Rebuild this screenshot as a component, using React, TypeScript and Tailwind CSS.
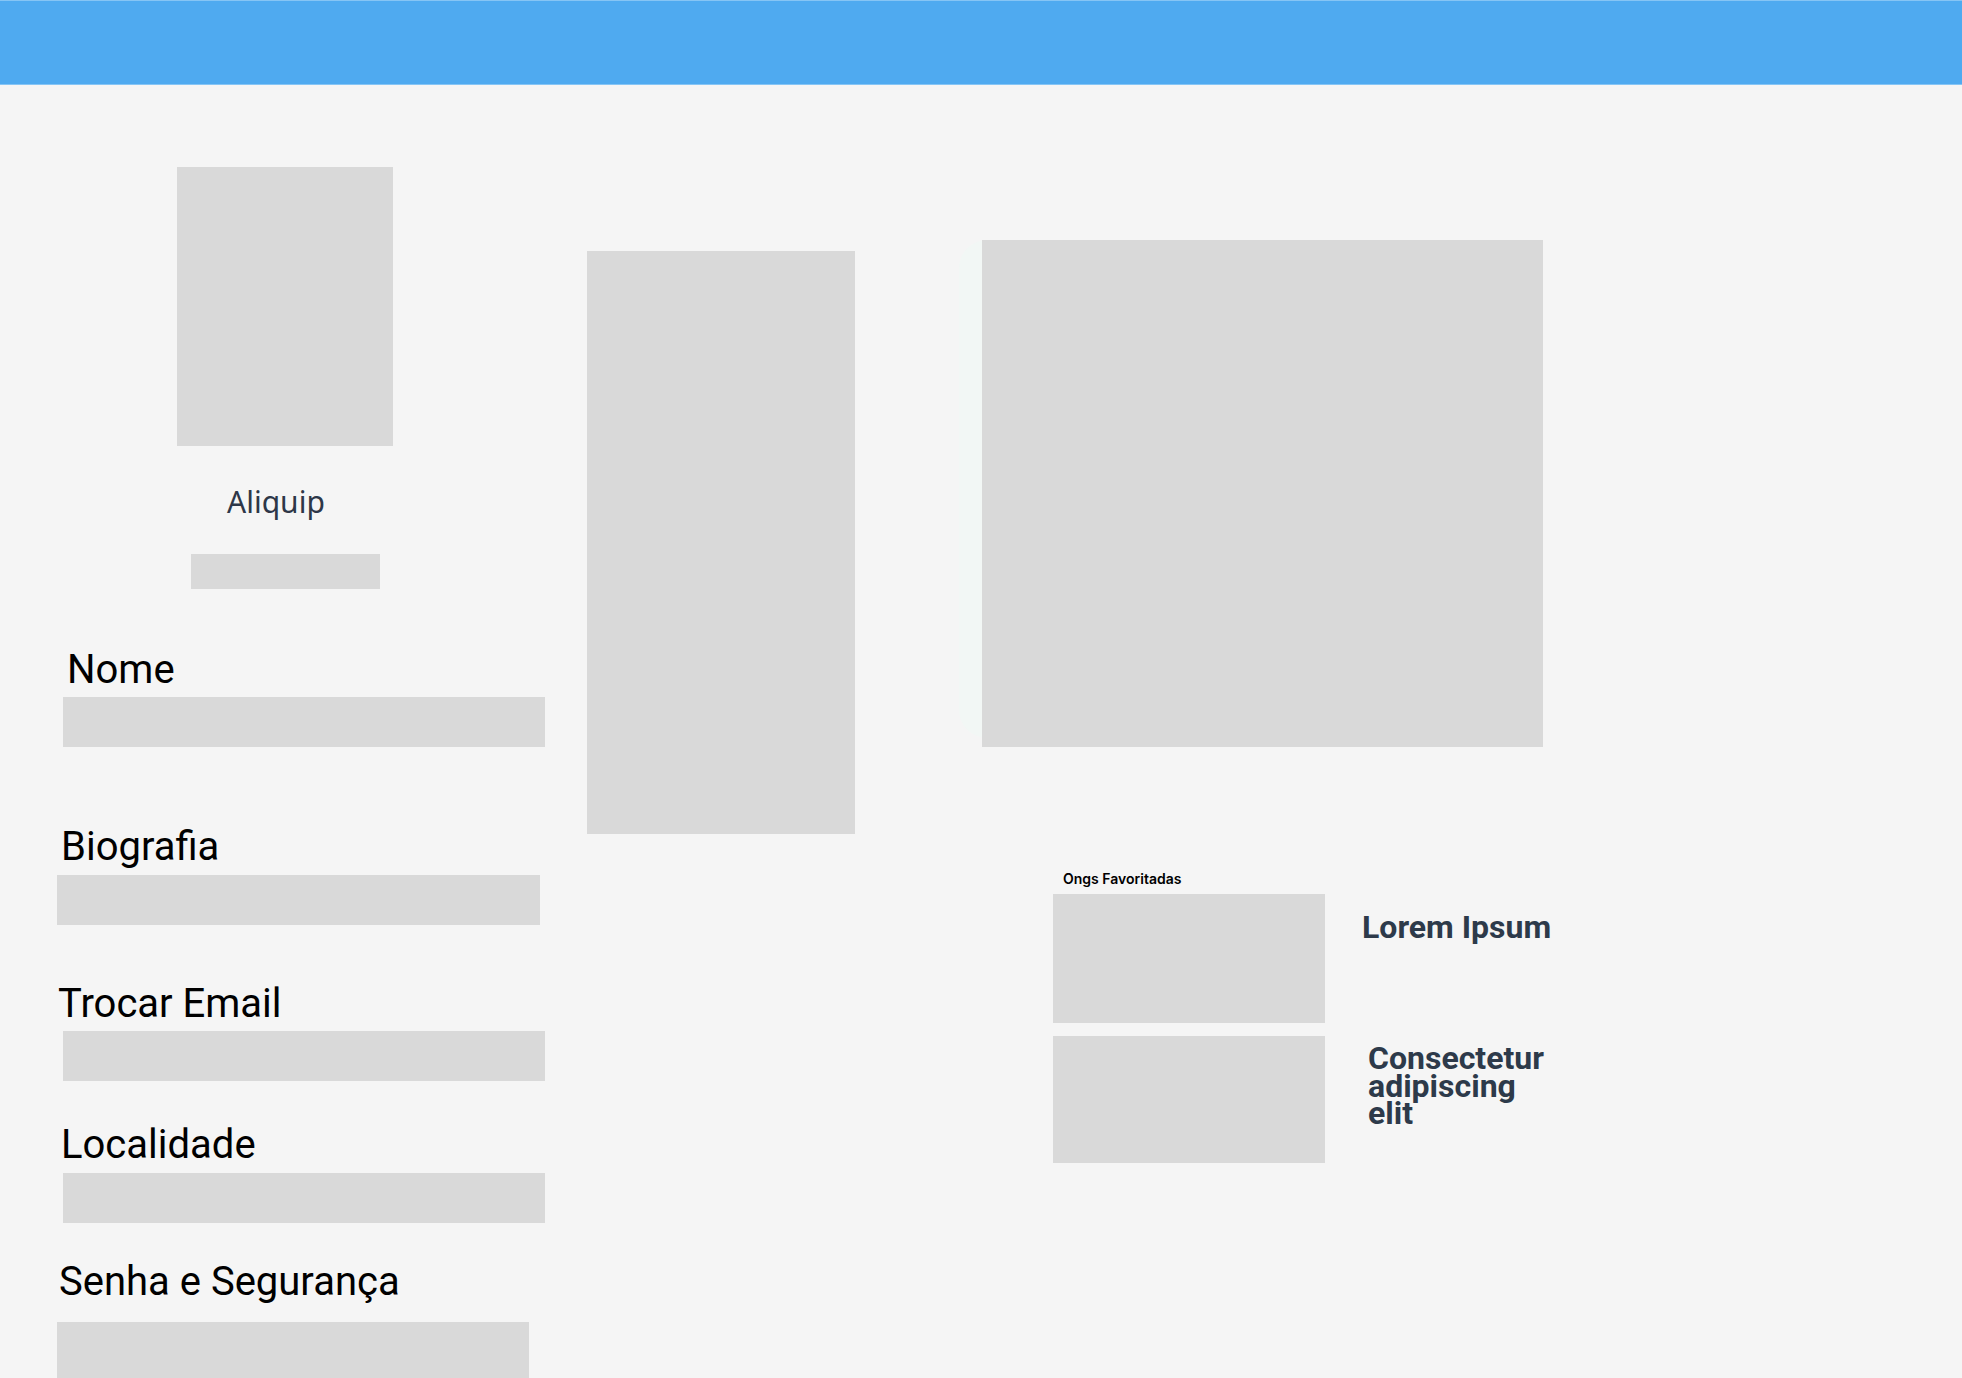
import React from 'react';

const fields = [
  { label: 'Nome', labelMl: 'ml-[10px]', gap: 'mt-[57px]', inputMt: 'mt-[4px]', inputMl: 'ml-[6px]', inputW: 'w-[482px]', inputH: 'h-[50px]' },
  { label: 'Biografia', labelMl: 'ml-[4px]', gap: 'mt-[76px]', inputMt: 'mt-[5px]', inputMl: 'ml-0', inputW: 'w-[483px]', inputH: 'h-[50px]' },
  { label: 'Trocar Email', labelMl: 'ml-[1px]', gap: 'mt-[55px]', inputMt: 'mt-[4px]', inputMl: 'ml-[6px]', inputW: 'w-[482px]', inputH: 'h-[50px]' },
  { label: 'Localidade', labelMl: 'ml-[4px]', gap: 'mt-[40px]', inputMt: 'mt-[5px]', inputMl: 'ml-[6px]', inputW: 'w-[482px]', inputH: 'h-[50px]' },
  { label: 'Senha e Segurança', labelMl: 'ml-[2px]', gap: 'mt-[35px]', inputMt: 'mt-[17px]', inputMl: 'ml-0', inputW: 'w-[472px]', inputH: 'h-[60px]' },
];

const App: React.FC = () => {
  return (
    <div className="h-[1378px] w-full overflow-hidden bg-[#f5f5f5] font-['Roboto',sans-serif]">
      {/* Top bar */}
      <header className="h-[85px] w-full bg-[#4faaf0] border-y border-[#86c5f5]" />

      <div className="flex pl-[57px]">
        {/* Profile column */}
        <div className="flex w-[488px] flex-col">
          <div className="ml-[120px] mt-[82px] h-[279px] w-[216px] bg-[#d9d9d9]" />
          <p className="ml-[170px] mt-[38px] text-[30px] leading-[36px] text-[#2d3748] font-['Noto_Sans',sans-serif]">
            Aliquip
          </p>
          <div className="ml-[134px] mt-[34px] h-[35px] w-[189px] bg-[#d9d9d9]" />

          {fields.map((f) => (
            <div key={f.label} className={`${f.gap} flex flex-col`}>
              <label className={`${f.labelMl} text-[40px] leading-[47px] text-black`}>{f.label}</label>
              <div className={`${f.inputMt} ${f.inputMl} ${f.inputW} ${f.inputH} bg-[#d9d9d9]`} />
            </div>
          ))}
        </div>

        {/* Middle banner */}
        <div className="ml-[42px] mt-[166px] h-[583px] w-[268px] bg-[#d9d9d9]" />

        {/* Right column */}
        <div className="ml-[127px] flex flex-col">
          <div className="relative mt-[155px]">
            <div className="absolute -left-[23px] top-0 h-[498px] w-[80px] rounded-[28px] bg-[#f2f7f5]" />
            <div className="relative h-[507px] w-[561px] bg-[#d9d9d9]" />
          </div>

          <div className="ml-[71px] mt-[123px] flex flex-col">
            <span className="ml-[10px] text-[14px] leading-[17px] font-semibold text-black font-['Inter',sans-serif]">
              Ongs Favoritadas
            </span>
            <div className="mt-[7px] flex items-start">
              <div className="h-[129px] w-[272px] bg-[#d9d9d9]" />
              <h3 className="ml-[37px] mt-[14px] text-[32px] leading-[38px] font-bold text-[#2d3a4a]">
                Lorem Ipsum
              </h3>
            </div>
            <div className="mt-[13px] flex items-start">
              <div className="h-[127px] w-[272px] bg-[#d9d9d9]" />
              <h3 className="ml-[43px] mt-[9px] w-[185px] text-[32px] leading-[27.5px] font-bold text-[#2d3a4a]">
                Consectetur adipiscing elit
              </h3>
            </div>
          </div>
        </div>
      </div>
    </div>
  );
};

export default App;
